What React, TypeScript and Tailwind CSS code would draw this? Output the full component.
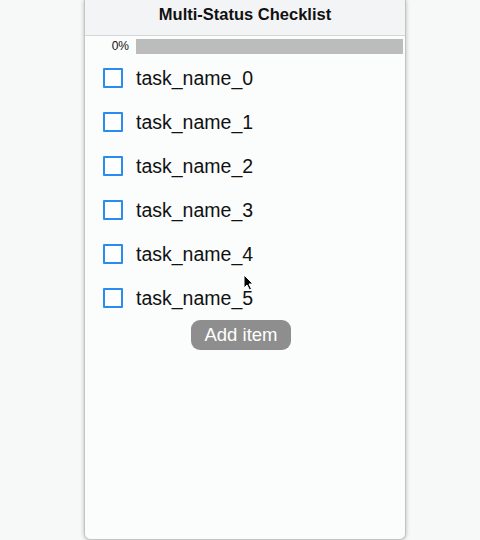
import React, { useState } from 'react';

const font = { fontFamily: '"Liberation Sans", Arial, sans-serif' };

function Checkbox({ checked, onToggle }: { checked: boolean; onToggle: () => void }) {
  return (
    <button
      type="button"
      onClick={onToggle}
      className="w-5 h-5 border-2 border-[#2b8cf0] bg-white rounded-[1px] shrink-0 flex items-center justify-center"
    >
      {checked && <span className="w-2.5 h-2.5 bg-[#2b8cf0]" />}
    </button>
  );
}

export default function App() {
  const [items, setItems] = useState(
    Array.from({ length: 6 }, (_, i) => ({ name: `task_name_${i}`, done: false }))
  );

  const done = items.filter(i => i.done).length;
  const pct = items.length ? Math.round((done / items.length) * 100) : 0;

  const toggle = (idx: number) =>
    setItems(items.map((it, i) => (i === idx ? { ...it, done: !it.done } : it)));

  const addItem = () =>
    setItems([...items, { name: `task_name_${items.length}`, done: false }]);

  return (
    <div className="w-[480px] h-[540px] bg-[#f7f9f9] relative overflow-hidden" style={font}>
      <div className="absolute left-[84px] top-0 w-[322px] h-[540px] bg-[#fbfcfc] border-x border-b border-[#c4c4c4] rounded-b-[6px] shadow-[0_0_4px_rgba(0,0,0,0.25)] flex flex-col">
        <div className="h-9 bg-[#f3f4f5] border-b border-[#d6d6d6] flex items-center justify-center">
          <span className="text-[16.5px] font-bold text-[#111] -mt-[6px]">Multi-Status Checklist</span>
        </div>

        <div className="flex items-center h-[16px] mt-[2px] pr-[2px]">
          <span className="w-[44px] text-right text-[12px] text-[#111]">{pct}%</span>
          <div className="flex-1 ml-[7px] h-[15px] bg-[#bcbcbc]">
            <div className="h-full bg-[#2b8cf0]" style={{ width: `${pct}%` }} />
          </div>
        </div>

        <div className="mt-[2px] flex flex-col">
          {items.map((it, i) => (
            <div key={i} className="h-11 flex items-center pl-[18px]">
              <Checkbox checked={it.done} onToggle={() => toggle(i)} />
              <span className="ml-[13px] mt-[2px] text-[19.5px] text-[#111]">{it.name}</span>
            </div>
          ))}
        </div>

        <div className="flex justify-center pr-[8px]">
          <button
            type="button"
            onClick={addItem}
            className="w-[100px] h-[30px] rounded-[9px] bg-[#8e8e8e] text-white text-[18.5px]"
          >
            Add item
          </button>
        </div>
      </div>

      <svg
        className="absolute left-[243px] top-[274px]"
        width="11"
        height="17"
        viewBox="0 0 11 17"
      >
        <path d="M1 1 L1 14 L4 11 L6.5 16 L8.5 15 L6 10 L10 10 Z" fill="#000" stroke="#fff" strokeWidth="1" />
      </svg>
    </div>
  );
}
